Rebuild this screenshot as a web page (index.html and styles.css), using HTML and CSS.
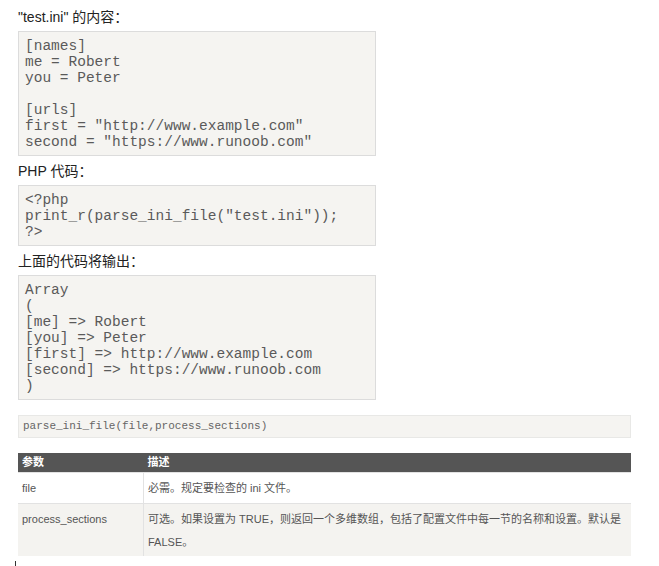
FILE: index.html
```html
<!DOCTYPE html>
<html>
<head>
  <meta charset="utf-8">
  <title>parse_ini_file</title>
  <link rel="stylesheet" href="styles.css">
</head>
<body>
  <div class="content">
    <p class="label">"test.ini" 的内容：</p>
    <pre class="code">[names]
me = Robert
you = Peter

[urls]
first = "http://www.example.com"
second = "https://www.runoob.com"</pre>

    <p class="label">PHP 代码：</p>
    <pre class="code">&lt;?php
print_r(parse_ini_file("test.ini"));
?&gt;</pre>

    <p class="label">上面的代码将输出：</p>
    <pre class="code">Array
(
[me] =&gt; Robert
[you] =&gt; Peter
[first] =&gt; http://www.example.com
[second] =&gt; https://www.runoob.com
)</pre>

    <div class="syntax">parse_ini_file(file,process_sections)</div>

    <table class="params">
      <tr>
        <th class="col-name">参数</th>
        <th>描述</th>
      </tr>
      <tr>
        <td class="col-name">file</td>
        <td>必需。规定要检查的 ini 文件。</td>
      </tr>
      <tr class="alt">
        <td class="col-name">process_sections</td>
        <td>可选。如果设置为 TRUE，则返回一个多维数组，包括了配置文件中每一节的名称和设置。默认是 FALSE。</td>
      </tr>
    </table>

    <div class="caret"></div>
  </div>
</body>
</html>
```

FILE: styles.css
```css
body {
  margin: 0;
  padding: 7px 0 0 18px;
  background: #fff;
  font-family: "Liberation Sans", Arial, "Noto Sans CJK SC", sans-serif;
  color: #333;
}

.content {
  width: 613px;
}

.label {
  margin: 5px 0 4px;
  font-size: 14px;
  line-height: 20px;
  color: #222;
}

.label:first-child {
  margin-top: 0;
}

.code {
  width: 358px;
  box-sizing: border-box;
  margin: 0;
  padding: 6px 6px 5px;
  background-color: #f5f4f1;
  border: 1px solid #dcdcdc;
  font-family: "Liberation Mono", "Courier New", monospace;
  font-size: 14.5px;
  line-height: 16px;
  color: #5a5a5a;
}

.syntax {
  margin-top: 15px;
  padding: 3px 4px;
  background-color: #f5f4f1;
  border: 1px solid #e8e8e6;
  font-family: "Liberation Mono", "Courier New", monospace;
  font-size: 11px;
  line-height: 15px;
  color: #666;
}

.params {
  width: 613px;
  margin-top: 15px;
  border-collapse: collapse;
  font-size: 11px;
  color: #555;
}

.params th {
  background-color: #555;
  color: #fff;
  font-weight: bold;
  text-align: left;
  padding: 2px 4px;
  line-height: 15px;
}

.params td {
  border-top: 1px solid #e2e2e2;
  padding: 4px 4px 3px;
  line-height: 23px;
  vertical-align: top;
}

.params td.col-name {
  border-right: 1px solid #e2e2e2;
}

.params .col-name {
  width: 117px;
}

.params tr.alt td {
  background-color: #f4f3f0;
  padding-bottom: 2px;
}

.caret {
  width: 1px;
  height: 6px;
  margin: 5px 0 0 -3px;
  background: #333;
}
```
